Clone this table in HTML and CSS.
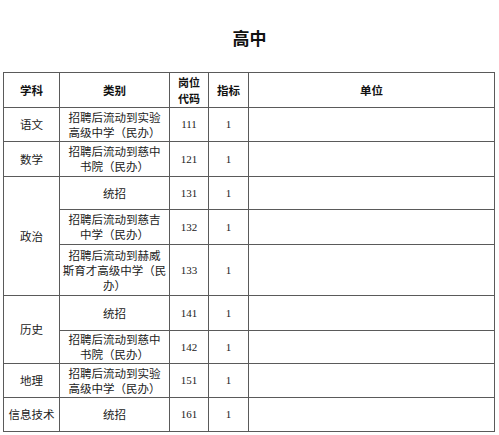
FILE: index.html
```html
<!DOCTYPE html>
<html lang="zh">
<head>
<meta charset="utf-8">
<link rel="stylesheet" href="styles.css">
</head>
<body>
<h1 class="title">高中</h1>
<table class="grid">
  <colgroup>
    <col class="c-subj">
    <col class="c-type">
    <col class="c-code">
    <col class="c-num">
    <col class="c-unit">
  </colgroup>
  <thead>
    <tr class="r35">
      <th>学科</th>
      <th>类别</th>
      <th class="small">岗位<br>代码</th>
      <th>指标</th>
      <th>单位</th>
    </tr>
  </thead>
  <tbody>
    <tr class="r34">
      <td>语文</td>
      <td>招聘后流动到实验<br>高级中学（民办）</td>
      <td class="n">111</td>
      <td class="n">1</td>
      <td></td>
    </tr>
    <tr class="r35">
      <td>数学</td>
      <td>招聘后流动到慈中<br>书院（民办）</td>
      <td class="n">121</td>
      <td class="n">1</td>
      <td></td>
    </tr>
    <tr class="r33">
      <td rowspan="3">政治</td>
      <td>统招</td>
      <td class="n">131</td>
      <td class="n">1</td>
      <td></td>
    </tr>
    <tr class="r35">
      <td>招聘后流动到慈吉<br>中学（民办）</td>
      <td class="n">132</td>
      <td class="n">1</td>
      <td></td>
    </tr>
    <tr class="r51">
      <td>招聘后流动到赫威<br>斯育才高级中学（民<br>办）</td>
      <td class="n">133</td>
      <td class="n">1</td>
      <td></td>
    </tr>
    <tr class="r35">
      <td rowspan="2">历史</td>
      <td>统招</td>
      <td class="n">141</td>
      <td class="n">1</td>
      <td></td>
    </tr>
    <tr class="r33">
      <td>招聘后流动到慈中<br>书院（民办）</td>
      <td class="n">142</td>
      <td class="n">1</td>
      <td></td>
    </tr>
    <tr class="r34">
      <td>地理</td>
      <td>招聘后流动到实验<br>高级中学（民办）</td>
      <td class="n">151</td>
      <td class="n">1</td>
      <td></td>
    </tr>
    <tr class="r34">
      <td>信息技术</td>
      <td>统招</td>
      <td class="n">161</td>
      <td class="n">1</td>
      <td></td>
    </tr>
  </tbody>
</table>
</body>
</html>
```
FILE: styles.css
```css
html, body {
  margin: 0;
  padding: 0;
  background: #ffffff;
}
body {
  font-family: "Noto Sans CJK SC", "Noto Sans", sans-serif;
  color: #222222;
}
.title {
  display: block;
  margin: 0;
  padding: 28px 0 0 0;
  height: 72px;
  box-sizing: border-box;
  text-align: center;
  font-size: 17px;
  line-height: 20px;
  font-weight: 700;
  color: #111111;
  font-family: "Noto Sans CJK SC", serif;
}
.grid {
  margin-left: 3px;
  border-collapse: collapse;
  table-layout: fixed;
  width: 491px;
}
.c-subj { width: 56px; }
.c-type { width: 110px; }
.c-code { width: 39px; }
.c-num { width: 40px; }
.c-unit { width: 246px; }
.grid th, .grid td {
  border: 1px solid #5a5a5a;
  padding: 0;
  text-align: center;
  vertical-align: middle;
  font-size: 11.5px;
  line-height: 15px;
  font-weight: 400;
  white-space: nowrap;
}
.grid th {
  font-weight: 700;
  color: #111111;
}
.grid th.small {
  font-size: 11px;
  line-height: 16px;
}
.grid td.n {
  font-family: "Liberation Serif", serif;
  font-size: 11px;
}
.r33 { height: 33px; }
.r34 { height: 34px; }
.r35 { height: 35px; }
.r51 { height: 51px; }
```
